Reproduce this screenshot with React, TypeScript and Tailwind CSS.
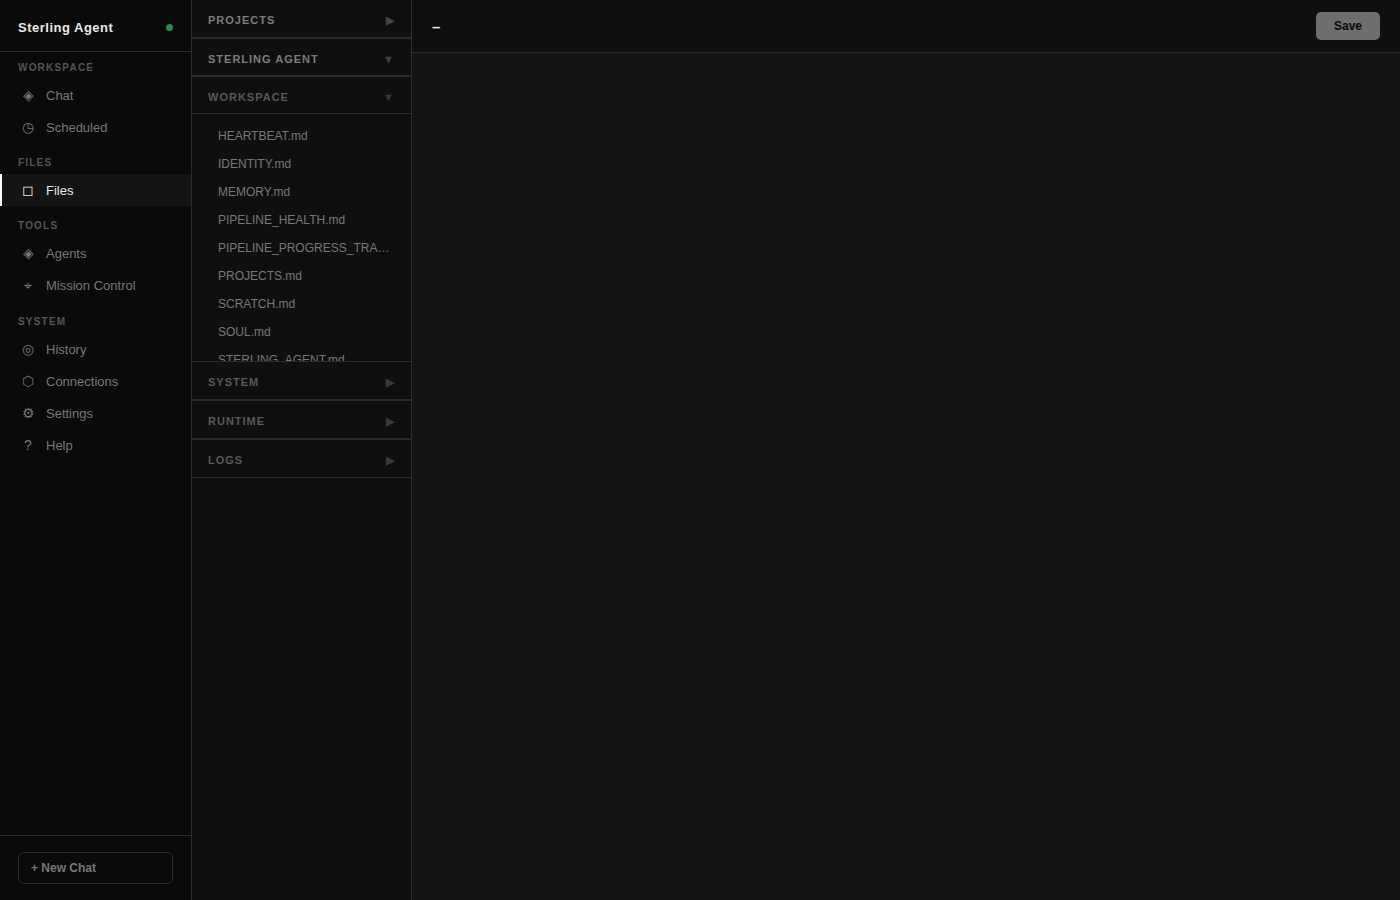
import clsx from "clsx";

type NavItem = { icon: string; label: string; active?: boolean };
type NavGroup = { title: string; heading: string; items: NavItem[] };

const groups: NavGroup[] = [
  {
    title: "WORKSPACE",
    heading: "h-[27px] pt-[8px]",
    items: [
      { icon: "◈", label: "Chat" },
      { icon: "◷", label: "Scheduled" },
    ],
  },
  { title: "FILES", heading: "h-[31px] pt-[12px]", items: [{ icon: "◻", label: "Files", active: true }] },
  {
    title: "TOOLS",
    heading: "h-[31px] pt-[12px]",
    items: [
      { icon: "◈", label: "Agents" },
      { icon: "⌖", label: "Mission Control" },
    ],
  },
  {
    title: "SYSTEM",
    heading: "h-[32px] pt-[13px]",
    items: [
      { icon: "◎", label: "History" },
      { icon: "⬡", label: "Connections" },
      { icon: "⚙", label: "Settings" },
      { icon: "?", label: "Help" },
    ],
  },
];

const files = [
  "HEARTBEAT.md",
  "IDENTITY.md",
  "MEMORY.md",
  "PIPELINE_HEALTH.md",
  "PIPELINE_PROGRESS_TRACKER.md",
  "PROJECTS.md",
  "SCRATCH.md",
  "SOUL.md",
  "STERLING_AGENT.md",
];

function SectionHeader({ title, open, bright, className }: { title: string; open?: boolean; bright?: boolean; className: string }) {
  return (
    <div
      className={clsx(
        "flex shrink-0 items-center justify-between border-[#2a2a2a] px-4 text-[11px] font-bold tracking-[1px]",
        open ? "pt-[5px]" : "pt-[3px]",
        bright ? "text-[#7c7c7c]" : "text-[#585858]",
        className,
      )}
    >
      <span>{title}</span>
      <span className={bright ? "text-[#444444]" : "text-[#393939]"}>{open ? "▼" : "▶"}</span>
    </div>
  );
}

export default function App() {
  return (
    <div className="flex h-[900px] w-[1400px] overflow-hidden bg-[#141414] font-['Liberation_Sans',sans-serif]">
      <aside className="flex w-48 shrink-0 flex-col border-r border-[#2a2a2a] bg-[#0a0a0a]">
        <div className="flex h-[52px] items-center justify-between border-b border-[#2a2a2a] px-[18px] pt-1">
          <span className="text-[13px] font-bold tracking-[0.5px] text-[#e8e8e8]">Sterling Agent</span>
          <span className="size-[7px] rounded-full bg-[#2d8a4e]" />
        </div>
        <nav className="flex-1">
          {groups.map((group) => (
            <div key={group.title}>
              <div className={clsx("px-[18px] text-[10px] leading-[15px] font-bold tracking-[1.2px] text-[#555555]", group.heading)}>
                {group.title}
              </div>
              {group.items.map((item) => (
                <div
                  key={item.label}
                  className={clsx(
                    "flex h-8 items-center gap-[10px] border-l-2 pl-[18px] text-[13px]",
                    item.active ? "border-white bg-[#141414] text-[#e8e8e8]" : "border-transparent text-[#777777]",
                  )}
                >
                  <span className="w-4 text-center text-[14px]">{item.icon}</span>
                  <span className="pt-px leading-[16px]">{item.label}</span>
                </div>
              ))}
            </div>
          ))}
        </nav>
        <div className="h-[65px] border-t border-[#2a2a2a] px-[18px] pt-4">
          <button className="flex h-8 w-full items-center rounded-md border border-[#2a2a2a] px-3 text-[12px] font-bold text-[#777777]">
            + New Chat
          </button>
        </div>
      </aside>

      <section className="flex w-[220px] shrink-0 flex-col border-r border-[#2a2a2a] bg-[#0f0f0f]">
        <SectionHeader title="PROJECTS" bright className="h-[39px] border-b-2" />
        <SectionHeader title="STERLING AGENT" bright open className="h-[38px] border-b-2" />
        <SectionHeader title="WORKSPACE" open className="h-[37px] border-b" />
        <div className="h-[248px] shrink-0 overflow-hidden border-b border-[#2a2a2a] pt-2">
          {files.map((file) => (
            <div key={file} className="h-7 truncate pr-5 pl-[26px] text-[12px] leading-7 text-[#777777]">
              {file}
            </div>
          ))}
        </div>
        <SectionHeader title="SYSTEM" className="h-[39px] border-b-2" />
        <SectionHeader title="RUNTIME" className="h-[39px] border-b-2" />
        <SectionHeader title="LOGS" className="h-[38px] border-b" />
      </section>

      <main className="flex flex-1 flex-col bg-[#141414]">
        <header className="flex h-[53px] items-center justify-between border-b border-[#2a2a2a] bg-[#0f0f0f] px-5">
          <span className="pt-[2px] text-[15px] font-bold text-[#e8e8e8]">–</span>
          <button className="h-7 w-16 rounded-[5px] bg-[#6e6e6e] text-[12px] font-bold text-[#0a0a0a]">Save</button>
        </header>
      </main>
    </div>
  );
}
